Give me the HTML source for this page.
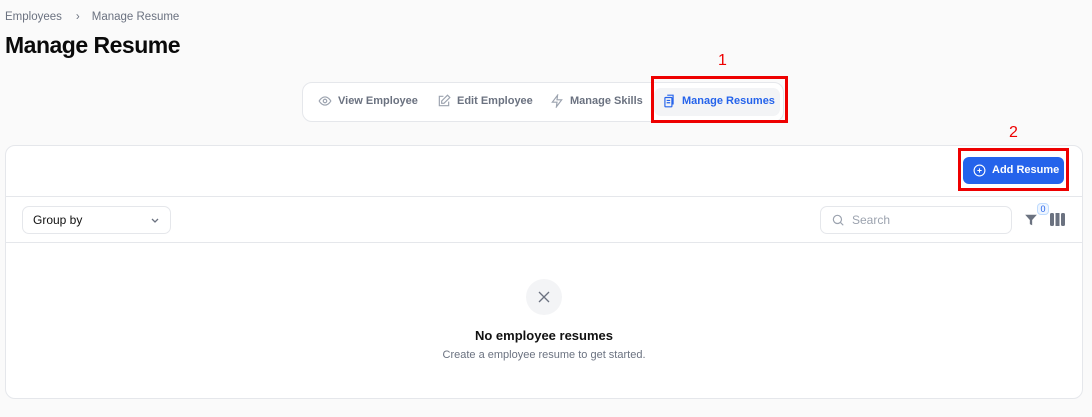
<!DOCTYPE html>
<html><head><style>
*{box-sizing:border-box;margin:0;padding:0}
body{width:1092px;height:417px;background:#fafafa;font-family:"Liberation Sans",sans-serif;position:relative;overflow:hidden;color:#111}
.abs{position:absolute}
.bc{left:5px;top:11px;font-size:11.5px;color:#6b7280;white-space:nowrap}
h1{position:absolute;left:5px;top:32px;font-size:23px;font-weight:700;color:#0a0a0a;letter-spacing:-0.5px;white-space:nowrap}
.tabs{left:302px;top:82px;width:482px;height:40px;background:#fff;border:1px solid #e5e7eb;border-radius:10px}
.tab{position:absolute;top:95px;font-size:11px;font-weight:700;color:#6b7280;white-space:nowrap}
.tab svg{position:absolute;left:-20px;top:-1px}
.active{left:654px;top:88px;width:126px;height:28px;background:#f3f4f6;border-radius:7px}
.red{border:3px solid #e00;}
.card{left:5px;top:145px;width:1078px;height:254px;background:#fff;border:1px solid #e5e7eb;border-radius:10px}
.btn{left:963px;top:157px;width:101px;height:27px;background:#2563eb;border-radius:6px;color:#fff;font-size:11px;font-weight:700;white-space:nowrap}
.sel{left:22px;top:206px;width:149px;height:28px;border:1px solid #e5e7eb;border-radius:7px;font-size:12px;padding:6px 10px}
.search{left:820px;top:206px;width:192px;height:28px;border:1px solid #e5e7eb;border-radius:7px;font-size:12px;color:#9ca3af;padding:6px 0 0 31px}
</style></head><body>
<div class="abs bc">Employees<span style="margin:0 12px 0 14px">›</span>Manage Resume</div>
<h1>Manage Resume</h1>
<div class="abs" style="left:718px;top:52px;color:#e00;font-size:16px">1</div>
<div class="abs tabs"></div>
<div class="abs active"></div>
<div class="tab" style="left:338px"><svg width="14" height="14" viewBox="0 0 24 24" fill="none" stroke="#9ca3af" stroke-width="2"><path d="M2 12s4-7 10-7 10 7 10 7-4 7-10 7S2 12 2 12z"/><circle cx="12" cy="12" r="3"/></svg>View Employee</div>
<div class="tab" style="left:457px"><svg width="14" height="14" viewBox="0 0 24 24" fill="none" stroke="#9ca3af" stroke-width="2"><path d="M11 4H4v16h16v-7"/><path d="M18 2l4 4-10 10H8v-4z"/></svg>Edit Employee</div>
<div class="tab" style="left:570px"><svg width="14" height="14" viewBox="0 0 24 24" fill="none" stroke="#9ca3af" stroke-width="2"><path d="M13 2L4 14h8l-1 8 9-12h-8z"/></svg>Manage Skills</div>
<div class="tab" style="left:682px;color:#2563eb"><svg width="14" height="14" viewBox="0 0 24 24" fill="none" stroke="#2563eb" stroke-width="2"><rect x="5" y="6" width="12" height="16" rx="1"/><path d="M9 2h10v16"/><path d="M8 11h6M8 15h6"/></svg>Manage Resumes</div>
<div class="abs red" style="left:651px;top:76px;width:137px;height:47px"></div>
<div class="abs card"></div>
<div class="abs" style="left:6px;top:196px;width:1076px;height:1px;background:#e5e7eb"></div>
<div class="abs" style="left:6px;top:242px;width:1076px;height:1px;background:#e5e7eb"></div>
<div class="abs" style="left:1009px;top:124px;color:#e00;font-size:16px">2</div>
<div class="abs btn"><svg class="abs" style="left:10px;top:7px" width="13" height="13" viewBox="0 0 24 24" fill="none" stroke="#fff" stroke-width="2"><circle cx="12" cy="12" r="10"/><path d="M12 8v8M8 12h8"/></svg><span class="abs" style="left:29px;top:7px">Add Resume</span></div>
<div class="abs red" style="left:958px;top:148px;width:111px;height:43px"></div>
<div class="abs sel">Group by<svg class="abs" style="right:10px;top:10px" width="10" height="8" viewBox="0 0 10 8" fill="none" stroke="#6b7280" stroke-width="1.3"><path d="M2 2l3 3 3-3"/></svg></div>
<div class="abs search">Search<svg class="abs" style="left:10px;top:6px" width="14" height="14" viewBox="0 0 24 24" fill="none" stroke="#9ca3af" stroke-width="2"><circle cx="11" cy="11" r="7"/><path d="M16 16l5 5"/></svg></div>
<svg class="abs" style="left:1024px;top:213px" width="14" height="14" viewBox="0 0 24 24" fill="#6b7280"><path d="M2 3h20l-8 9v9l-4-2v-7z"/></svg>
<div class="abs" style="left:1037px;top:203px;width:12px;height:12px;background:#eff6ff;border:1px solid #bfdbfe;border-radius:4px;font-size:9px;color:#2563eb;text-align:center;line-height:10px">0</div>
<svg class="abs" style="left:1050px;top:213px" width="15" height="13" viewBox="0 0 15 13" fill="#6b7280"><rect x="0" y="0" width="4" height="13" rx="1.5"/><rect x="5.5" y="0" width="4" height="13"/><rect x="11" y="0" width="4" height="13" rx="1.5"/></svg>
<div class="abs" style="left:526px;top:279px;width:36px;height:36px;border-radius:50%;background:#f3f4f6"></div>
<svg class="abs" style="left:537px;top:290px" width="14" height="14" viewBox="0 0 14 14" stroke="#6b7280" stroke-width="1.3"><path d="M2 2l10 10M12 2L2 12"/></svg>
<div class="abs" style="left:0;width:1088px;top:328px;text-align:center;font-size:13px;font-weight:700">No employee resumes</div>
<div class="abs" style="left:0;width:1088px;top:349px;text-align:center;font-size:11px;color:#6b7280">Create a employee resume to get started.</div>
</body></html>
